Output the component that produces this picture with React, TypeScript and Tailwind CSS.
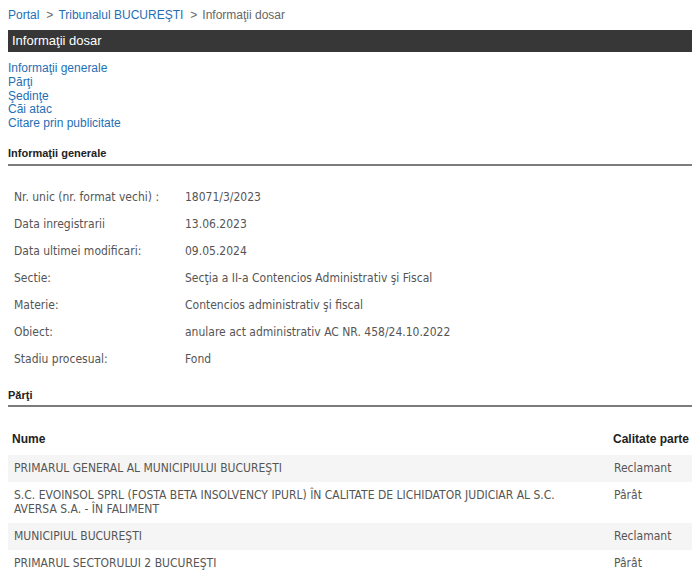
import React from 'react';

const info: [string, string][] = [
  ['Nr. unic (nr. format vechi) :', '18071/3/2023'],
  ['Data inregistrarii', '13.06.2023'],
  ['Data ultimei modificari:', '09.05.2024'],
  ['Sectie:', 'Secţia a II-a Contencios Administrativ şi Fiscal'],
  ['Materie:', 'Contencios administrativ şi fiscal'],
  ['Obiect:', 'anulare act administrativ AC NR. 458/24.10.2022'],
  ['Stadiu procesual:', 'Fond'],
];

const parti: [string, string][] = [
  ['PRIMARUL GENERAL AL MUNICIPIULUI BUCUREŞTI', 'Reclamant'],
  [
    'S.C. EVOINSOL SPRL (FOSTA BETA INSOLVENCY IPURL) ÎN CALITATE DE LICHIDATOR JUDICIAR AL S.C. AVERSA S.A. - ÎN FALIMENT',
    'Pârât',
  ],
  ['MUNICIPIUL BUCUREŞTI', 'Reclamant'],
  ['PRIMARUL SECTORULUI 2 BUCUREŞTI', 'Pârât'],
];

const App: React.FC = () => {
  return (
    <div className="min-h-[572px] bg-white px-2 font-['Liberation_Sans',Arial,sans-serif]">
      {/* Breadcrumb */}
      <div className="pt-[7px] text-[12px] leading-[16px] text-[#666]">
        <span className="text-[#1f6fb5]">Portal</span>
        <span className="ml-[7px] mr-[5px]">&gt;</span>
        <span className="text-[#1f6fb5]">Tribunalul BUCUREŞTI</span>
        <span className="ml-[7px] mr-[5px]">&gt;</span>
        <span>Informaţii dosar</span>
      </div>

      {/* Title bar */}
      <div className="mt-[7px] h-[22px] bg-[#373737] pl-1 text-[13px] leading-[22px] text-white">
        Informaţii dosar
      </div>

      {/* Anchors */}
      <div className="mt-[10px] flex flex-col text-[12px] leading-[13.75px] text-[#1f6fb5]">
        <span>Informaţii generale</span>
        <span>Părţi</span>
        <span>Şedinţe</span>
        <span>Căi atac</span>
        <span>Citare prin publicitate</span>
      </div>

      {/* Informatii generale */}
      <div className="mt-[15px] border-b-2 border-[#7c7c7c] pb-[4px] text-[11px] font-bold leading-[14px] text-[#222]">
        Informaţii generale
      </div>
      <div className="mt-[18px] font-['DejaVu_Sans_Condensed','DejaVu_Sans',sans-serif] text-[12px] leading-[14px] text-[#555]">
        {info.map(([label, value]) => (
          <div key={label} className="flex py-[6.5px]">
            <div className="w-[177px] shrink-0 pl-[6px]">{label}</div>
            <div>{value}</div>
          </div>
        ))}
      </div>

      {/* Parti */}
      <div className="mt-[15px] border-b-2 border-[#7c7c7c] pb-[3px] text-[11px] font-bold leading-[14px] text-[#222]">
        Părţi
      </div>
      <div className="mt-[25px] flex px-1 text-[12px] font-bold leading-[14px] text-[#222]">
        <div className="flex-1">Nume</div>
        <div className="w-[75px] shrink-0 whitespace-nowrap">Calitate parte</div>
      </div>
      <div className="mt-[9px] font-['DejaVu_Sans_Condensed','DejaVu_Sans',sans-serif] text-[12px] leading-[14px] text-[#555]">
        {parti.map(([nume, calitate], i) => (
          <div key={nume} className={`flex py-[6.5px] ${i % 2 === 0 ? 'bg-[#f5f5f5]' : 'bg-white'}`}>
            <div className="flex-1 pl-[6px] pr-4">{nume}</div>
            <div className="w-[78px] shrink-0">{calitate}</div>
          </div>
        ))}
      </div>
    </div>
  );
};

export default App;
